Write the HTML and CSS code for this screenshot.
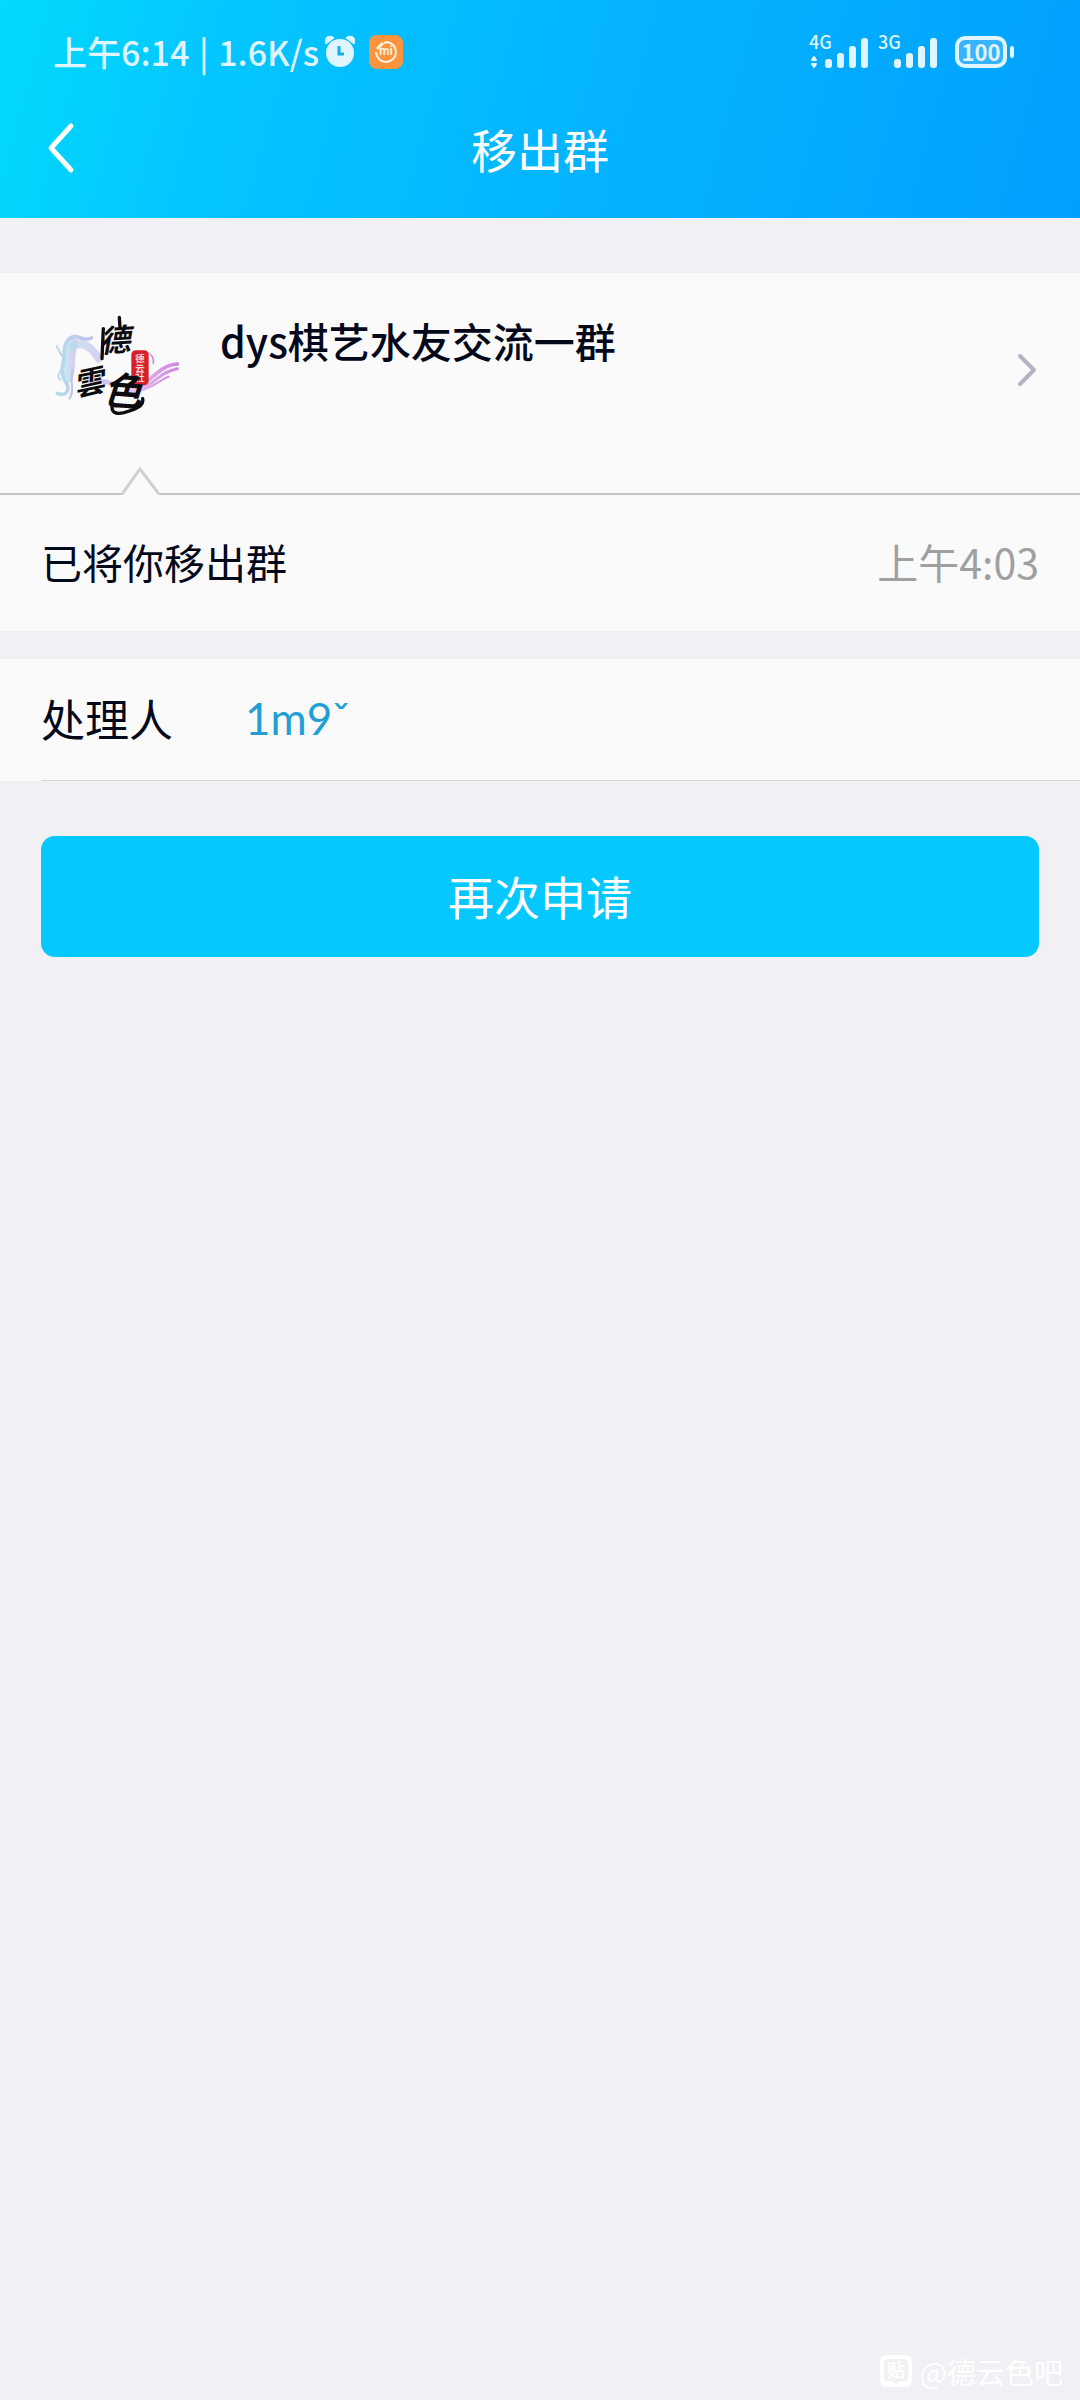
FILE: index.html
```html
<!DOCTYPE html>
<html lang="zh-CN">
<head>
    <meta charset="UTF-8">
    <meta name="viewport" content="width=device-width, initial-scale=1.0">
    <title>移出群</title>
    <link rel="stylesheet" href="styles.css">
</head>
<body>
    <header class="header">
        <!-- Status bar -->
        <div class="status-bar">
            <span class="status-text">上午6:14 <span class="separator">|</span> 1.6K/s</span>
            <svg class="alarm-icon" width="30" height="32" viewBox="0 0 30 32">
                <path d="M1 8 A5 5 0 0 1 9 2 Z M29 8 A5 5 0 0 0 21 2 Z" fill="#dff5ff" stroke="#dff5ff" stroke-width="1"/>
                <circle cx="15" cy="17" r="14" fill="#dff5ff"/>
                <path d="M14 10 V18 H19" fill="none" stroke="#14aeea" stroke-width="3"/>
            </svg>
            <svg class="app-icon" width="34" height="34" viewBox="0 0 34 34">
                <rect width="34" height="34" rx="8" fill="#fb943c"/>
                <path d="M15 8 L18 7 A10 10 0 1 1 7 17" fill="none" stroke="#fff3e0" stroke-width="2"/>
                <path d="M8 14 L14 8" stroke="#fff3e0" stroke-width="3"/>
                <text x="17" y="20" class="app-text">mi</text>
            </svg>
            <div class="status-right">
                <svg width="62" height="52" viewBox="-2 -9 62 52">
                    <text x="0" y="14" class="net-text">4G</text>
                    <path d="M3 25 L5 22 L7 25 Z M3 29 L5 32 L7 29 Z" fill="#dff5ff" stroke="#dff5ff" stroke-width="2" stroke-linejoin="round"/>
                    <g fill="#dff5ff">
                        <rect x="16" y="24" width="7" height="9" rx="3"/>
                        <rect x="28" y="18" width="7" height="15" rx="3"/>
                        <rect x="40" y="11" width="7" height="22" rx="3"/>
                        <rect x="52" y="3" width="7" height="30" rx="3"/>
                    </g>
                </svg>
                <svg width="62" height="52" viewBox="-2 -9 62 52">
                    <text x="0" y="14" class="net-text">3G</text>
                    <g fill="#dff5ff">
                        <rect x="16" y="24" width="7" height="9" rx="3"/>
                        <rect x="28" y="18" width="7" height="15" rx="3"/>
                        <rect x="40" y="11" width="7" height="22" rx="3"/>
                        <rect x="52" y="3" width="7" height="30" rx="3"/>
                    </g>
                </svg>
                <div class="battery">
                    <span class="battery-level">100</span>
                    <span class="battery-cap"></span>
                </div>
            </div>
        </div>

        <!-- Title bar -->
        <div class="title-bar">
            <button class="back-btn" aria-label="返回">
                <svg width="32" height="52" viewBox="0 0 32 52">
                    <path d="M26 4 L6 26 L26 48" fill="none" stroke="#fff" stroke-width="5" stroke-linecap="round" stroke-linejoin="round"/>
                </svg>
            </button>
            <h1 class="title">移出群</h1>
        </div>
    </header>

    <main>
        <!-- Group card -->
        <section class="card">
            <a class="group" href="#group">
                <svg class="avatar" width="138" height="128" viewBox="33 48 414 384">
                    <defs>
                        <linearGradient id="smoke" x1="0" y1="0" x2="1" y2="0">
                            <stop offset="0" stop-color="#b4dcec"/>
                            <stop offset="1" stop-color="#c4c0ea"/>
                        </linearGradient>
                        <linearGradient id="ribbon" x1="0" y1="0" x2="1" y2="0">
                            <stop offset="0" stop-color="#e6c4f0"/>
                            <stop offset="1" stop-color="#cf86e2"/>
                        </linearGradient>
                    </defs>
                    <g fill="none" stroke="url(#smoke)" stroke-linecap="round">
                        <path d="M184 144 C160 158 145 132 124 142 C96 158 106 190 100 214 C92 240 98 268 112 284 C118 306 104 320 82 310" stroke-width="11"/>
                        <path d="M128 160 C112 200 124 230 112 262" stroke-width="34" opacity="0.7"/>
                        <path d="M126 170 C158 150 186 172 206 206" stroke-width="24" opacity="0.7"/>
                        <path d="M80 168 C88 184 90 192 98 200 M96 238 C84 250 82 262 90 270 M128 240 C118 280 136 300 118 326" stroke-width="6"/>
                    </g>
                    <path d="M190 280 C220 268 236 276 262 290" fill="none" stroke="#cfc4ee" stroke-width="14"/>
                    <g fill="none" stroke="url(#ribbon)" stroke-linecap="round">
                        <path d="M292 302 C350 302 376 226 442 222" stroke-width="11"/>
                        <path d="M310 304 C362 298 384 246 442 236" stroke-width="9"/>
                        <path d="M316 306 C368 296 380 274 416 260" stroke-width="6"/>
                        <path d="M352 188 C366 192 372 206 370 220" stroke-width="5"/>
                    </g>
                    <rect x="304" y="181" width="52" height="105" rx="13" fill="#d8202a"/>
                    <g class="seal-text">
                        <text x="330" y="216">德</text>
                        <text x="330" y="245">云</text>
                        <text x="330" y="274">社</text>
                    </g>
                    <g class="logo-text">
                        <text x="254" y="184" font-size="92" transform="rotate(-4 255 145)">德</text>
                        <text x="176" y="310" font-size="92" transform="rotate(-12 178 275)">雲</text>
                        <text x="278" y="346" font-size="116" transform="rotate(4 286 300)">色</text>
                    </g>
                    <path d="M268 82 L270 112 M220 116 L216 206 M246 350 C246 372 264 372 282 368 C310 360 344 350 338 326" fill="none" stroke="#0b0b10" stroke-width="10" stroke-linecap="round"/>
                </svg>
                <span class="group-name">dys棋艺水友交流一群</span>
                <svg class="arrow" width="24" height="36" viewBox="0 0 24 36">
                    <path d="M5 4 L19 18 L5 32" fill="none" stroke="#b2b4c2" stroke-width="4" stroke-linecap="round" stroke-linejoin="round"/>
                </svg>
            </a>
            <div class="divider">
                <span class="divider-start"></span>
                <svg width="37" height="28" viewBox="0 0 37 28">
                    <path d="M0 27 L18 2 L37 27" fill="none" stroke="#d0d0d3" stroke-width="3"/>
                </svg>
                <span class="divider-end"></span>
            </div>
            <div class="message">
                <span>已将你移出群</span>
                <time class="time">上午4:03</time>
            </div>
        </section>

        <!-- Handler -->
        <section class="card handler">
            <span class="handler-label">处理人</span>
            <a class="handler-name" href="#user">1m9ˇ</a>
        </section>

        <button class="apply-btn">再次申请</button>
    </main>

    <footer class="watermark">
        <svg width="32" height="32" viewBox="0 0 32 32">
            <rect width="32" height="32" rx="6" fill="#fff"/>
            <path d="M9 4 H23 Q28 4 28 9 V21 Q28 26 23 26 H20 L16 29 L12 26 H9 Q4 26 4 21 V9 Q4 4 9 4 Z" fill="#f0f0f5"/>
            <text x="16" y="22" class="tie-text">贴</text>
        </svg>
        <span>@德云色吧</span>
    </footer>
</body>
</html>
```

FILE: styles.css
```css
* { box-sizing: border-box; }

body {
    display: flex;
    flex-direction: column;
    min-height: 100vh;
    margin: 0;
    background-color: #f0f0f5;
    color: #03081a;
    font-family: "Noto Sans CJK SC", sans-serif;
    font-size: 41px;
}

svg { display: block; flex-shrink: 0; }
a { color: inherit; text-decoration: none; }
button { border: none; cursor: pointer; font-family: inherit; }

/* Header */
.header {
    background: linear-gradient(105deg, #00dafd 0%, #04c6ff 20%, #04b6ff 50%, #01a0ff 100%);
    color: #fff;
}

.status-bar {
    display: flex;
    align-items: center;
    height: 84px;
    padding: 20px 66px 0 53px;
    color: #dff5ff;
}

.status-text {
    font-size: 34px;
    font-weight: 500;
    line-height: 40px;
}

.separator { margin: 0 2px; }

.alarm-icon { margin-left: 6px; }
.app-icon { margin-left: 14px; }

.app-text {
    fill: #fff3e0;
    font-size: 11px;
    font-weight: 700;
    text-anchor: middle;
}

.status-right {
    display: flex;
    align-items: center;
    gap: 7px;
    margin-left: auto;
}

.net-text {
    fill: #dff5ff;
    font-size: 18px;
    font-weight: 500;
}

.battery {
    display: flex;
    align-items: center;
    gap: 3px;
    margin-left: 10px;
}

.battery-level {
    width: 52px;
    height: 32px;
    border: 4px solid #dff5ff;
    border-radius: 10px;
    background-color: #38b4ff;
    font-size: 22px;
    font-weight: 700;
    line-height: 22px;
    text-align: center;
}

.battery-cap {
    width: 4px;
    height: 12px;
    border-radius: 2px;
    background-color: #dff5ff;
}

.title-bar {
    display: grid;
    grid-template-columns: 120px 1fr 120px;
    align-items: center;
    height: 134px;
    padding-bottom: 6px;
}

.back-btn {
    padding: 0 0 0 45px;
    background: none;
}

.title {
    margin: 0;
    font-size: 46px;
    font-weight: 400;
    line-height: 60px;
    text-align: center;
}

/* Cards */
.card {
    background-color: #fbfafb;
}

main { padding-top: 55px; }

.group {
    display: flex;
    align-items: center;
    padding: 33px 41px;
}

.group-name {
    flex: 1;
    align-self: flex-start;
    margin-left: 41px;
    font-weight: 500;
    line-height: 68px;
}

.seal-text {
    fill: #f6d5d5;
    font-size: 28px;
    font-weight: 700;
    text-anchor: middle;
}

.logo-text {
    fill: #0b0b10;
    font-style: italic;
    font-weight: 700;
    text-anchor: middle;
}

.divider {
    display: flex;
    align-items: flex-end;
}

.divider-start,
.divider-end {
    height: 2px;
    background-color: #c6c6c9;
}

.divider-start { width: 122px; }
.divider-end { flex: 1; }

.message {
    display: flex;
    align-items: center;
    justify-content: space-between;
    height: 136px;
    padding: 0 41px 4px;
}

.time { color: #a0a0a0; }

.handler {
    display: flex;
    align-items: center;
    height: 122px;
    margin-top: 28px;
    padding: 0 0 4px 41px;
    font-size: 44px;
    line-height: 60px;
    /* hairline starts at the text edge */
    background-image: linear-gradient(#d6d6da, #d6d6da);
    background-position: 41px 100%;
    background-repeat: no-repeat;
    background-size: 100% 1px;
}

.handler-name {
    margin-left: 72px;
    color: #1f9fd4;
    font-family: Lato, "Noto Sans CJK SC", sans-serif;
}

.apply-btn {
    display: block;
    width: calc(100% - 82px);
    height: 121px;
    margin: 55px auto 0;
    padding: 0 0 4px;
    border-radius: 14px;
    background-color: #05c8ff;
    color: #fff;
    font-size: 46px;
}

/* Watermark */
.watermark {
    display: flex;
    align-items: center;
    justify-content: flex-end;
    gap: 8px;
    margin-top: auto;
    padding: 0 17px 9px 0;
    color: #fff;
    font-size: 29px;
    line-height: 40px;
}

.tie-text {
    fill: #fff;
    font-size: 18px;
    font-weight: 700;
    text-anchor: middle;
}
```
